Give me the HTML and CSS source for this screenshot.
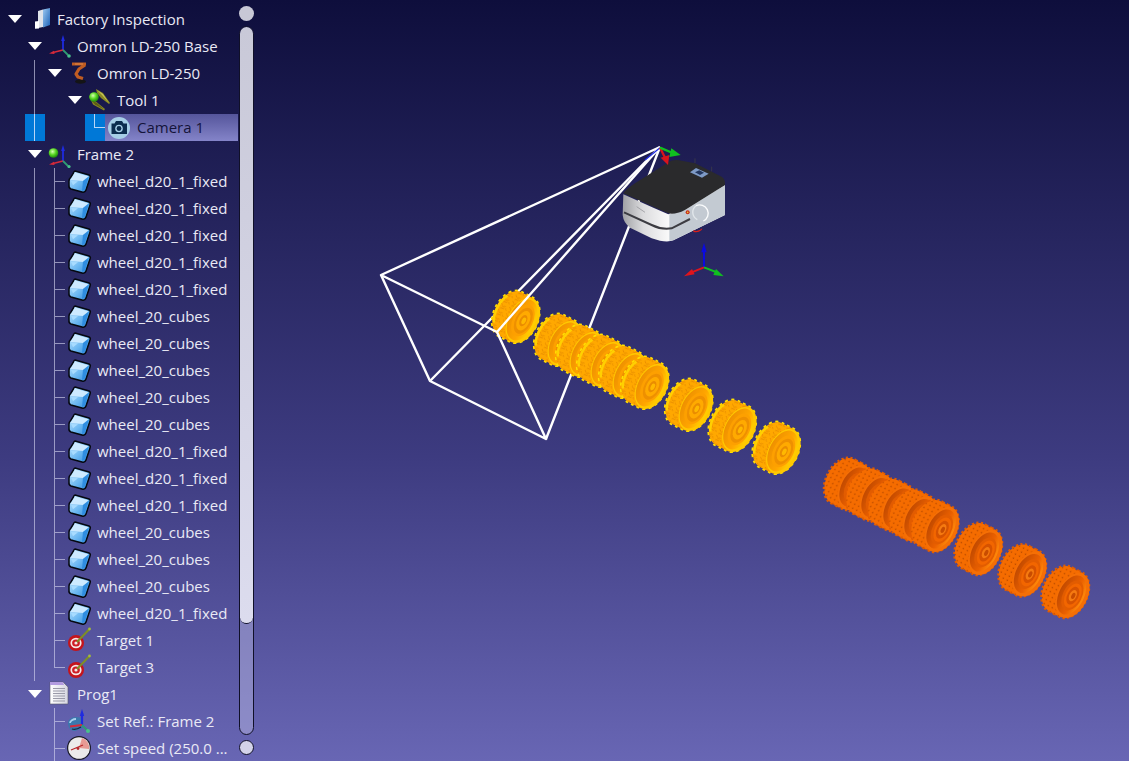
FILE: index.html
```html
<!DOCTYPE html>
<html lang="en">
<head>
<meta charset="utf-8">
<title>Factory Inspection</title>
<link rel="stylesheet" href="styles.css">
</head>
<body>
<svg class="defs" width="0" height="0" aria-hidden="true">
  <defs>
    <linearGradient id="g-blue" x1="0" y1="0" x2="1" y2="1"><stop offset="0" stop-color="#9cc8f0"/><stop offset="1" stop-color="#1d63b8"/></linearGradient>
    <linearGradient id="g-cube" x1="0" y1="0" x2="1" y2="1"><stop offset="0" stop-color="#c5e8ff"/><stop offset=".55" stop-color="#6db9f2"/><stop offset="1" stop-color="#2a86da"/></linearGradient>
    <radialGradient id="g-ball" cx=".4" cy=".35" r=".7"><stop offset="0" stop-color="#d6ffb0"/><stop offset=".5" stop-color="#55d620"/><stop offset="1" stop-color="#16780c"/></radialGradient>
    <linearGradient id="g-doc" x1="0" x2="1"><stop offset="0" stop-color="#fff"/><stop offset="1" stop-color="#d5d5e0"/></linearGradient>
    <linearGradient id="g-front" x1="0" x2="1"><stop offset="0" stop-color="#a0a1a5"/><stop offset=".2" stop-color="#dcdcde"/><stop offset=".5" stop-color="#ffffff"/><stop offset="1" stop-color="#f4f5f6"/></linearGradient>

    <symbol id="i-station" viewBox="0 0 30 27"><path d="M13 5l5-1.500V21l-5 1z" fill="#dfe3ea"/><path d="M10 15.500l4-.5v7.500l-4 .3z" fill="#fff"/><path d="M18 3.500l7-1.500v17l-7 2.500z" fill="url(#g-blue)"/></symbol>
    <symbol id="i-frame" viewBox="0 0 30 27"><path d="M18 17V5" stroke="#1f2be0" stroke-width="1.800"/><path d="M18 2l-1.900 6h3.800z" fill="#1f2be0"/><path d="M18 17 8 19.500" stroke="#d62a3a" stroke-width="1.800"/><path d="M4 20.500l5-2.800.5 3.200z" fill="#d62a3a"/><path d="M18 17l5 5" stroke="#2f9a72" stroke-width="1.800"/><circle cx="24" cy="23" r="1.800" fill="#48c28c"/></symbol>
    <symbol id="i-robot" viewBox="0 0 30 27"><ellipse cx="15.500" cy="21.500" rx="5.500" ry="2.200" fill="#141416"/><path d="M7 4h14M20 5l-6 4-3 5 2 3 5 1.500" fill="none" stroke="#c05c22" stroke-width="3.200" stroke-linejoin="round"/><path d="M10 4h8" stroke="#e08a4a" stroke-width="1"/></symbol>
    <symbol id="i-tool" viewBox="0 0 30 27"><path d="M11 2l7 4 7 10-1 1-8-6-4-5z" fill="#8b8a24"/><path d="M4 9l5 4 11 9-1 1.500-11-6z" fill="#8b8a24"/><path d="M12 3l6 4 6 9-7-8z" fill="#c7c65a"/><path d="M6 13l6 3 7 6.500-9-5z" fill="#5d5d14"/><circle cx="9" cy="10" r="4.800" fill="url(#g-ball)"/></symbol>
    <symbol id="i-camera" viewBox="0 0 30 27"><circle cx="14" cy="14" r="11" fill="#a7cfe7"/><path d="M6.500 9.500h3l1.500-2.500h6l1.500 2.500h3.500V20h-15.500z" fill="#0c2d4e"/><circle cx="14" cy="14.500" r="3.800" fill="#a7cfe7"/><circle cx="14" cy="14.500" r="2.400" fill="#0c2d4e"/></symbol>
    <symbol id="i-frame-ball" viewBox="0 0 30 27"><path d="M18 20V7" stroke="#1f2be0" stroke-width="1.800"/><path d="M18 4l-1.900 6h3.800z" fill="#1f2be0"/><path d="M18 20 8 22.500" stroke="#d62a3a" stroke-width="1.800"/><path d="M4 23.500l5-2.800.5 3.200z" fill="#d62a3a"/><path d="M18 20l5 5" stroke="#2f9a72" stroke-width="1.800"/><circle cx="24" cy="25.500" r="1.600" fill="#48c28c"/><circle cx="8.500" cy="12" r="4.800" fill="url(#g-ball)"/></symbol>
    <symbol id="i-cube" viewBox="0 0 30 27"><path d="M10 3 24 7q2 1 1 3l-4 12q-1 3-4 2L6 21q-2.500-1-2-4v-4q0-2 2-4l2.500-4Q9 3 10 3z" fill="url(#g-cube)" stroke="#050810" stroke-width="1.500"/><path d="M5.500 12 10 4.500l13.500 3.700L18 13z" fill="#cdeaff"/><path d="M18 13l6-4.500-4 13-3 1.500z" fill="#2f8de0"/><path d="M6 13l7 .3-5 4z" fill="#a8dcff"/></symbol>
    <symbol id="i-target" viewBox="0 0 30 27"><circle cx="11" cy="16" r="8" fill="#c4141c"/><ellipse cx="11" cy="16" rx="5.600" ry="5.200" fill="#f4e8e8"/><ellipse cx="11" cy="16" rx="3.900" ry="3.600" fill="#cf1d25"/><circle cx="11" cy="16" r="1.600" fill="#f4e8e8"/><path d="M12 15 24 2.500" stroke="#7d8f26" stroke-width="2"/><circle cx="24.500" cy="2" r="1.400" fill="#a4bd38"/></symbol>
    <symbol id="i-prog" viewBox="0 0 30 27"><path d="M5 1h13l5 5v17H5z" fill="url(#g-doc)" stroke="#55556a" stroke-width=".6"/><path d="M5 1h13l1 3H5z" fill="#b39ce0"/><path d="M8 7.500h12M8 10h12M8 12.500h12M8 15h12M8 17.500h12M8 20h12" stroke="#9a9aa8" stroke-width="1"/></symbol>
    <symbol id="i-setref" viewBox="0 0 30 27"><path d="M3 15c0-3 3-6 8-6l7 1v10l-8 3c-4 0-7-3-7-8z" fill="#3b78ad"/><path d="M5 15c0-2 3-4 6-4" stroke="#aad0ee" stroke-width="1.800" fill="none"/><path d="M7 21c3 1 6 0 9-2" stroke="#14293f" stroke-width="1.200" fill="none"/><path d="M17 17V5" stroke="#1f2be0" stroke-width="2.200"/><path d="M17 1l-2.200 7h4.400z" fill="#1f2be0"/><path d="M17 17 5 18.500" stroke="#d62a3a" stroke-width="2"/><path d="M17 17l6 6" stroke="#2f9a72" stroke-width="2"/><circle cx="23" cy="23" r="2" fill="#48c28c"/></symbol>
    <symbol id="i-speed" viewBox="0 0 30 27"><circle cx="14" cy="13" r="12" fill="#1a1a28"/><circle cx="14" cy="13" r="10.800" fill="#ecebea"/><path d="M14 13 17 3a10 10 0 0 1 7 11z" fill="#e79a94"/><path d="M6 15 18 10" stroke="#b8272a" stroke-width="1.300"/><circle cx="13" cy="13.500" r="1.400" fill="#b8272a"/></symbol>

    <linearGradient id="g-face-y" x1="0" x2="1"><stop offset="0" stop-color="#ee9000"/><stop offset=".6" stop-color="#ffa600"/><stop offset="1" stop-color="#ffd000"/></linearGradient>
    <linearGradient id="g-face-r" x1="0" x2="1"><stop offset="0" stop-color="#c24a00"/><stop offset=".6" stop-color="#ea6000"/><stop offset="1" stop-color="#ff8a0a"/></linearGradient>
    <pattern id="p-y" width="9" height="7" patternUnits="userSpaceOnUse"><rect width="9" height="7" fill="#ffa800"/><path d="M1 1l2.500 2.500 3-1M2 6l4-1M7 4l1.500 2" stroke="#e68a00" stroke-width=".9" fill="none"/></pattern>
    <pattern id="p-r" width="4.500" height="4.500" patternUnits="userSpaceOnUse"><rect width="4.500" height="4.500" fill="#f56c00"/><rect x="1.500" y="1.500" width="1.300" height="1.300" fill="#b54800"/></pattern>

    <g id="wheel-y">
      <g transform="rotate(27)">
        <g fill="none" stroke="#ffe000" stroke-width="2" stroke-dasharray="3 3.500">
          <ellipse cx="-13" rx="16.500" ry="25"/><ellipse cx="-7" rx="16.500" ry="25"/><ellipse cx="-1" rx="16.500" ry="25"/>
        </g>
        <g fill="url(#p-y)">
          <ellipse cx="-13" rx="16" ry="24.500"/><ellipse cx="-10" rx="16" ry="24.500"/><ellipse cx="-7" rx="16" ry="24.500"/><ellipse cx="-4" rx="16" ry="24.500"/><ellipse cx="-1" rx="16" ry="24.500"/>
        </g>
        <path d="M-24 -15A12 21 0 0 0 -24 15" fill="none" stroke="#ffd000" stroke-width="2.400"/>
        <ellipse cx="1" rx="15" ry="24" fill="#ffc800"/>
        <ellipse cx="0" rx="13" ry="22" fill="url(#g-face-y)"/>
        <ellipse cx="1" rx="10" ry="17" fill="#fda000"/>
        <ellipse cx="1.500" rx="8" ry="14" fill="#ee9000"/>
        <ellipse cx="1.500" rx="6" ry="10.500" fill="#ffaa00"/>
        <ellipse cx="1.500" rx="3.500" ry="6" fill="#ea8c00"/>
        <ellipse cx="2" rx="2" ry="3.500" fill="#ffb800"/>
      </g>
    </g>
    <g id="wheel-r">
      <g transform="rotate(27)">
        <g fill="none" stroke="#e25c00" stroke-width="2.200" stroke-dasharray="2.200 2.300">
          <ellipse cx="-13" rx="16.500" ry="25"/><ellipse cx="-7" rx="16.500" ry="25"/><ellipse cx="-1" rx="16.500" ry="25"/>
        </g>
        <g fill="url(#p-r)">
          <ellipse cx="-13" rx="16" ry="24.500"/><ellipse cx="-10" rx="16" ry="24.500"/><ellipse cx="-7" rx="16" ry="24.500"/><ellipse cx="-4" rx="16" ry="24.500"/><ellipse cx="-1" rx="16" ry="24.500"/>
        </g>
        <ellipse cx="1" rx="15" ry="24" fill="#f56f05"/>
        <ellipse cx="0" rx="12.500" ry="21" fill="url(#g-face-r)"/>
        <ellipse cx="1" rx="9.500" ry="16" fill="#e25c00"/>
        <ellipse cx="1.500" rx="7.500" ry="13" fill="#f26600"/>
        <ellipse cx="1.500" rx="5.500" ry="9.500" fill="#d65200"/>
        <ellipse cx="1.500" rx="3.500" ry="6" fill="#f57a10"/>
        <ellipse cx="2" rx="1.800" ry="3.200" fill="#c84c00"/>
      </g>
    </g>
  </defs>
</svg>

<div class="app">
  <aside class="panel">
    <ul class="tree">
      <li class="row"><span class="toggle"></span><svg class="icon"><use href="#i-station"/></svg><span class="label">Factory Inspection</span></li>
      <li class="row"><span class="cell"></span><span class="toggle"></span><svg class="icon"><use href="#i-frame"/></svg><span class="label">Omron LD-250 Base</span></li>
      <li class="row"><span class="cell"></span><span class="cell guide"></span><span class="toggle"></span><svg class="icon"><use href="#i-robot"/></svg><span class="label">Omron LD-250</span></li>
      <li class="row"><span class="cell"></span><span class="cell guide"></span><span class="cell"></span><span class="toggle"></span><svg class="icon"><use href="#i-tool"/></svg><span class="label">Tool 1</span></li>
      <li class="row"><span class="cell"></span><span class="cell guide drop"></span><span class="cell"></span><span class="cell"></span><span class="cell corner drop"></span><span class="selected"><svg class="icon"><use href="#i-camera"/></svg><span class="label">Camera 1</span></span></li>
      <li class="row"><span class="cell"></span><span class="toggle"></span><svg class="icon"><use href="#i-frame-ball"/></svg><span class="label">Frame 2</span></li>
      <li class="row"><span class="cell"></span><span class="cell guide"></span><span class="cell tee"></span><svg class="icon"><use href="#i-cube"/></svg><span class="label">wheel_d20_1_fixed</span></li>
      <li class="row"><span class="cell"></span><span class="cell guide"></span><span class="cell tee"></span><svg class="icon"><use href="#i-cube"/></svg><span class="label">wheel_d20_1_fixed</span></li>
      <li class="row"><span class="cell"></span><span class="cell guide"></span><span class="cell tee"></span><svg class="icon"><use href="#i-cube"/></svg><span class="label">wheel_d20_1_fixed</span></li>
      <li class="row"><span class="cell"></span><span class="cell guide"></span><span class="cell tee"></span><svg class="icon"><use href="#i-cube"/></svg><span class="label">wheel_d20_1_fixed</span></li>
      <li class="row"><span class="cell"></span><span class="cell guide"></span><span class="cell tee"></span><svg class="icon"><use href="#i-cube"/></svg><span class="label">wheel_d20_1_fixed</span></li>
      <li class="row"><span class="cell"></span><span class="cell guide"></span><span class="cell tee"></span><svg class="icon"><use href="#i-cube"/></svg><span class="label">wheel_20_cubes</span></li>
      <li class="row"><span class="cell"></span><span class="cell guide"></span><span class="cell tee"></span><svg class="icon"><use href="#i-cube"/></svg><span class="label">wheel_20_cubes</span></li>
      <li class="row"><span class="cell"></span><span class="cell guide"></span><span class="cell tee"></span><svg class="icon"><use href="#i-cube"/></svg><span class="label">wheel_20_cubes</span></li>
      <li class="row"><span class="cell"></span><span class="cell guide"></span><span class="cell tee"></span><svg class="icon"><use href="#i-cube"/></svg><span class="label">wheel_20_cubes</span></li>
      <li class="row"><span class="cell"></span><span class="cell guide"></span><span class="cell tee"></span><svg class="icon"><use href="#i-cube"/></svg><span class="label">wheel_20_cubes</span></li>
      <li class="row"><span class="cell"></span><span class="cell guide"></span><span class="cell tee"></span><svg class="icon"><use href="#i-cube"/></svg><span class="label">wheel_d20_1_fixed</span></li>
      <li class="row"><span class="cell"></span><span class="cell guide"></span><span class="cell tee"></span><svg class="icon"><use href="#i-cube"/></svg><span class="label">wheel_d20_1_fixed</span></li>
      <li class="row"><span class="cell"></span><span class="cell guide"></span><span class="cell tee"></span><svg class="icon"><use href="#i-cube"/></svg><span class="label">wheel_d20_1_fixed</span></li>
      <li class="row"><span class="cell"></span><span class="cell guide"></span><span class="cell tee"></span><svg class="icon"><use href="#i-cube"/></svg><span class="label">wheel_20_cubes</span></li>
      <li class="row"><span class="cell"></span><span class="cell guide"></span><span class="cell tee"></span><svg class="icon"><use href="#i-cube"/></svg><span class="label">wheel_20_cubes</span></li>
      <li class="row"><span class="cell"></span><span class="cell guide"></span><span class="cell tee"></span><svg class="icon"><use href="#i-cube"/></svg><span class="label">wheel_20_cubes</span></li>
      <li class="row"><span class="cell"></span><span class="cell guide"></span><span class="cell tee"></span><svg class="icon"><use href="#i-cube"/></svg><span class="label">wheel_d20_1_fixed</span></li>
      <li class="row"><span class="cell"></span><span class="cell guide"></span><span class="cell tee"></span><svg class="icon"><use href="#i-target"/></svg><span class="label">Target 1</span></li>
      <li class="row"><span class="cell"></span><span class="cell guide"></span><span class="cell corner"></span><svg class="icon"><use href="#i-target"/></svg><span class="label">Target 3</span></li>
      <li class="row"><span class="cell"></span><span class="toggle"></span><svg class="icon"><use href="#i-prog"/></svg><span class="label">Prog1</span></li>
      <li class="row"><span class="cell"></span><span class="cell"></span><span class="cell tee"></span><svg class="icon"><use href="#i-setref"/></svg><span class="label">Set Ref.: Frame 2</span></li>
      <li class="row"><span class="cell"></span><span class="cell"></span><span class="cell tee"></span><svg class="icon"><use href="#i-speed"/></svg><span class="label">Set speed (250.0 ...</span></li>
    </ul>
    <div class="scrollbar">
      <div class="cap cap-top"></div>
      <div class="track"><div class="thumb"></div></div>
      <div class="cap cap-bottom"></div>
    </div>
  </aside>

  <svg class="scene" viewBox="254 0 875 761" aria-label="3D view">
    <g class="wire">
      <path d="M660 147 430 381M660 147 546 439"/>
    </g>
    <use href="#wheel-y" x="522" y="320"/>
    <use href="#wheel-y" x="564" y="343"/>
    <use href="#wheel-y" x="586" y="354"/>
    <use href="#wheel-y" x="607" y="364"/>
    <use href="#wheel-y" x="629" y="375"/>
    <use href="#wheel-y" x="651" y="386"/>
    <use href="#wheel-y" x="695" y="408"/>
    <use href="#wheel-y" x="738.500" y="429"/>
    <use href="#wheel-y" x="782.500" y="451"/>

    <use href="#wheel-r" x="854" y="487"/>
    <use href="#wheel-r" x="876" y="497.500"/>
    <use href="#wheel-r" x="898" y="508"/>
    <use href="#wheel-r" x="919" y="518.500"/>
    <use href="#wheel-r" x="941" y="529"/>
    <use href="#wheel-r" x="984.500" y="552"/>
    <use href="#wheel-r" x="1028.500" y="573.500"/>
    <use href="#wheel-r" x="1071.500" y="595"/>

    <g class="wire">
      <path d="M660 147 381 275 430 381 546 439 497 332 381 275M660 147 497 332"/>
    </g>

    <g transform="translate(610 135) scale(.3333)">
      <path d="M40 178 130 218 175 238 345 150 345 240 190 316Q175 322 150 317L125 310 60 278Q40 262 38 240z" fill="url(#g-front)"/>
      <path d="M178 238Q205 232 225 225L345 150 345 240 190 316 178 318z" fill="#c3cad2"/>
      <path d="M40 175Q45 165 75 145L175 82Q190 72 215 77L255 85 335 125Q347 133 345 150L225 225Q195 240 175 235L130 215z" fill="#2a2a2c"/>
      <path d="M42 232 125 270Q155 285 185 280L240 252" fill="none" stroke="#3c3c42" stroke-width="6"/>
      <path d="M250 285q12 8 27-5l-2 5q-12 10-25 5z" fill="#d8201c"/>
      <path d="M258 212A25 25 0 0 1 280 258" fill="none" stroke="#fbfcfd" stroke-width="4"/>
      <path d="M258 212A25 25 0 0 0 262 254" fill="none" stroke="#e2e7eb" stroke-width="4"/>
      <circle cx="233" cy="232" r="6" fill="#c62e1a"/>
      <circle cx="233" cy="232" r="2.500" fill="#e5c93b"/>
      <path d="M240 112 258 99 296 116 276 128z" fill="#7e9ac6"/>
      <path d="M255 112 268 106 282 113 270 120z" fill="#22365f"/>
      <path d="M255 70v14M305 95v14" stroke="#444" stroke-width="2"/>
      <path d="M80 215 105 232" stroke="#8a8a90" stroke-width="2"/>
      <path d="M150 38 105 75" stroke="#1f2be0" stroke-width="4"/>
      <path d="M150 38 166 70" stroke="#d8141c" stroke-width="7"/>
      <path d="M152 68 178 60 174 90z" fill="#d8141c"/>
      <path d="M150 38 188 54" stroke="#10c020" stroke-width="7"/>
      <path d="M184 40 212 60 178 66z" fill="#10c020"/>
      <path d="M282 397V350" stroke="#0a0ae0" stroke-width="6"/>
      <path d="M282 323 274 352H290z" fill="#0a0ae0"/>
      <path d="M282 397 245 412" stroke="#e0141c" stroke-width="6"/>
      <path d="M222 424 246 402 254 418z" fill="#e0141c"/>
      <path d="M282 397 318 411" stroke="#10c020" stroke-width="6"/>
      <path d="M341 424 310 420 318 402z" fill="#10c020"/>
    </g>
  </svg>
</div>
</body>
</html>
```
FILE: styles.css
```css
* { box-sizing: border-box; }

html, body {
  margin: 0;
  height: 100%;
  overflow: hidden;
}

body {
  background: linear-gradient(180deg, #0e0e3c 0%, #3d3b80 60%, #6866b4 100%);
  color: #e9e9f5;
  font-family: "Open Sans", "Noto Sans", "Liberation Sans", sans-serif;
  font-size: 15px;
}

.defs { position: absolute; }

.app {
  display: flex;
  height: 761px;
}

.panel {
  display: flex;
  flex: 0 0 254px;
  height: 761px;
  overflow: hidden;
}

.tree {
  flex: 0 0 239px;
  list-style: none;
  margin: 0;
  padding: 6px 1px 0 5px;
}

.row {
  display: flex;
  align-items: center;
  height: 27px;
  white-space: nowrap;
}

.cell,
.toggle {
  position: relative;
  flex: 0 0 20px;
  height: 27px;
}

.toggle::before {
  content: "";
  position: absolute;
  left: 2.5px;
  top: 9px;
  border-left: 7.5px solid transparent;
  border-right: 7.5px solid transparent;
  border-top: 8.5px solid #fff;
}

.guide::before,
.tee::before,
.corner::before {
  content: "";
  position: absolute;
  left: 9px;
  top: 0;
  bottom: 0;
  border-left: 1px solid rgba(214, 214, 240, .62);
}

.tee::after,
.corner::after {
  content: "";
  position: absolute;
  left: 10px;
  top: 13px;
  width: 10px;
  border-top: 1px solid rgba(214, 214, 240, .62);
}

.corner::before { bottom: 13px; }

.drop { background: #0078d7; }
.drop::before,
.drop::after { border-color: rgba(230, 238, 255, .8); }

.icon {
  flex: 0 0 30px;
  width: 30px;
  height: 27px;
  margin-right: 2px;
}

.label { line-height: 27px; }

.selected {
  display: flex;
  flex: 1;
  height: 27px;
  background: linear-gradient(180deg, #55559b 0%, #8484c9 100%);
  color: #14143a;
}

.scrollbar {
  display: flex;
  flex: 0 0 15px;
  flex-direction: column;
  gap: 5px;
  padding: 6px 0;
}

.cap {
  flex: 0 0 15px;
  border-radius: 50%;
  background: rgba(226, 226, 240, .88);
  border: 1px solid #101028;
}

.cap-top {
  border: 0;
  background: #c8c8d6;
}

.track {
  flex: 1;
  border: 1px solid #101028;
  border-radius: 8px;
  background: rgba(190, 190, 230, .45);
  overflow: hidden;
}

.thumb {
  height: 597px;
  border-radius: 7px;
  background: linear-gradient(180deg, #c9c9d8 0%, #dcdcee 100%);
  border-bottom: 1px solid #101028;
}

.scene {
  flex: 1;
  height: 761px;
  display: block;
}

.wire path {
  fill: none;
  stroke: #fff;
  stroke-width: 2.4;
  stroke-linejoin: round;
}
```
